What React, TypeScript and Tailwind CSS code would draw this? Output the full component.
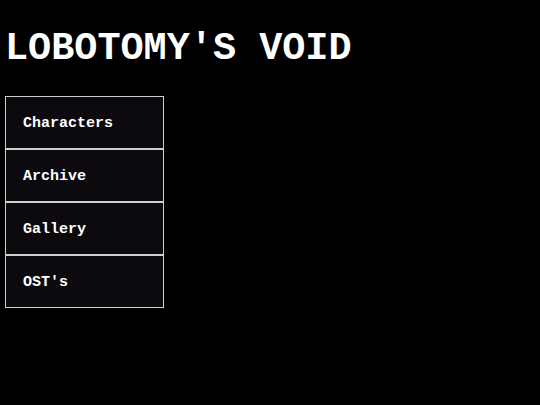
const ITEMS = ["Characters", "Archive", "Gallery", "OST's"];

export default function App() {
  return (
    <div className="min-h-[405px] bg-black font-['Courier_New','Nimbus_Mono_PS','Courier','Liberation_Mono',monospace] text-white">
      <h1 className="px-[5px] pt-[27px] text-[38.5px] font-bold leading-[44px]">
        LOBOTOMY'S VOID
      </h1>
      <nav className="ml-[5px] mt-[25px] flex w-[159px] flex-col bg-[#0c0a0e]">
        {ITEMS.map((item) => (
          <a
            key={item}
            href="#"
            className="flex h-[53px] items-center border border-[#cfcfcf] pl-[17px] pt-[3px] text-[15px] font-bold"
          >
            {item}
          </a>
        ))}
      </nav>
    </div>
  );
}
